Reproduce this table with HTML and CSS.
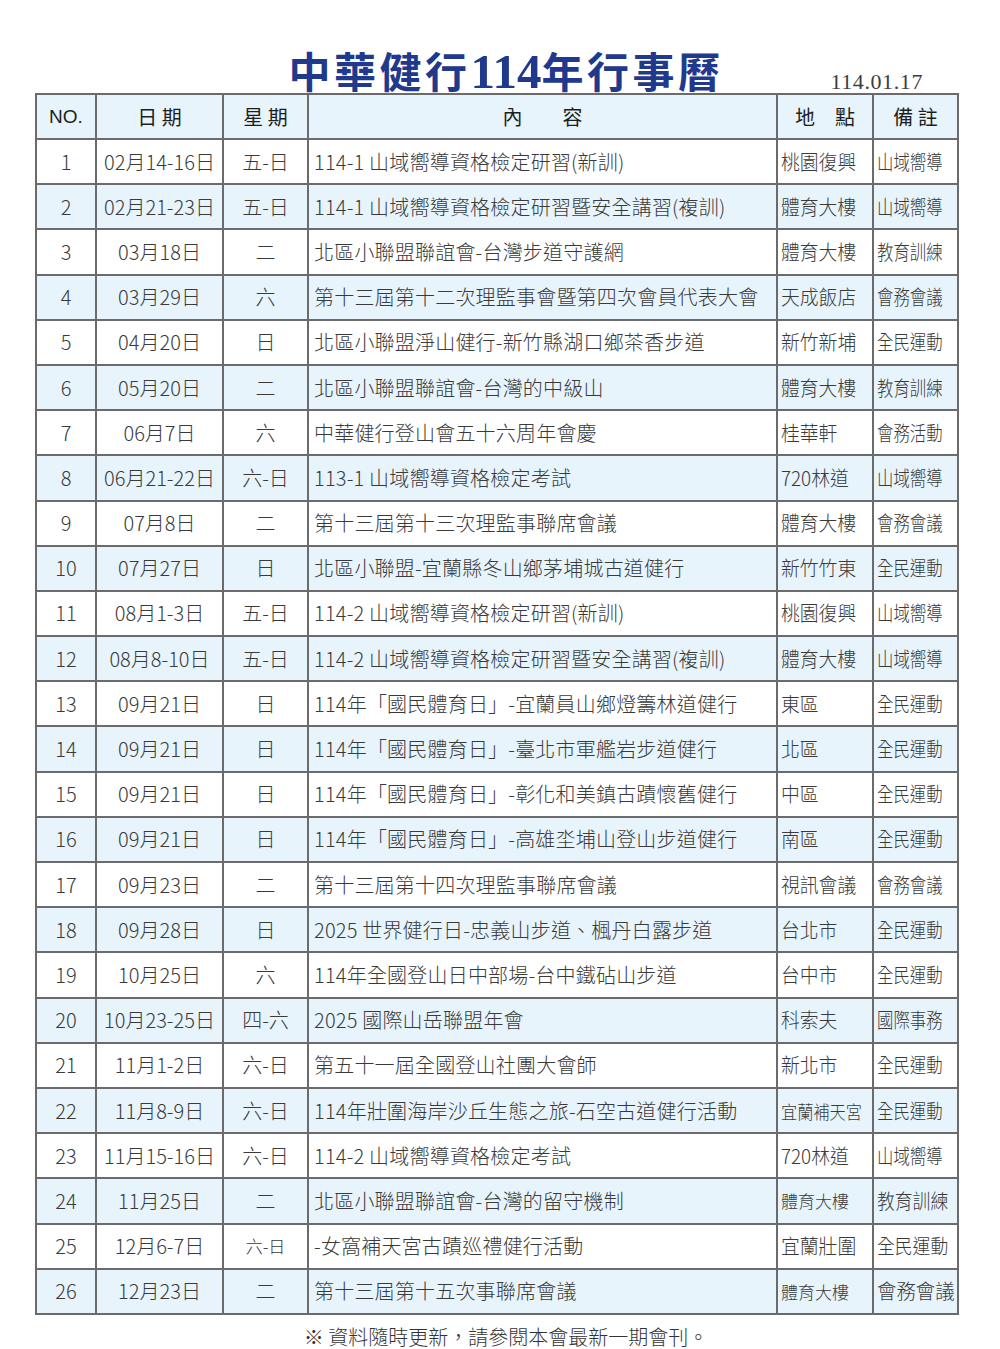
FILE: index.html
```html
<!DOCTYPE html>
<html lang="zh-Hant">
<head>
<meta charset="utf-8">
<title>中華健行114年行事曆</title>
<link rel="stylesheet" href="styles.css">
</head>
<body>
<div class="page">
  <header class="head">
    <div></div>
    <h1 class="title">中華健行<span class="num">114</span>年行事曆</h1>
    <div class="date">114.01.17</div>
  </header>
  <table class="cal">
    <colgroup>
      <col class="c-no"><col class="c-date"><col class="c-wk"><col class="c-ct"><col class="c-loc"><col class="c-rm">
    </colgroup>
    <thead>
      <tr><th class="no">NO.</th><th>日&nbsp;期</th><th>星&nbsp;期</th><th>內&emsp;&emsp;容</th><th>地&emsp;點</th><th>備&nbsp;註</th></tr>
    </thead>
    <tbody>
      <tr><td>1</td><td>02月14-16日</td><td>五-日</td><td class="ct">114-1 山域嚮導資格檢定研習(新訓)</td><td class="loc"><span class="l">桃園復興</span></td><td class="rm"><span class="r">山域嚮導</span></td></tr>
      <tr><td>2</td><td>02月21-23日</td><td>五-日</td><td class="ct">114-1 山域嚮導資格檢定研習暨安全講習(複訓)</td><td class="loc"><span class="l">體育大樓</span></td><td class="rm"><span class="r">山域嚮導</span></td></tr>
      <tr><td>3</td><td>03月18日</td><td>二</td><td class="ct">北區小聯盟聯誼會-台灣步道守護網</td><td class="loc"><span class="l">體育大樓</span></td><td class="rm"><span class="r">教育訓練</span></td></tr>
      <tr><td>4</td><td>03月29日</td><td>六</td><td class="ct">第十三屆第十二次理監事會暨第四次會員代表大會</td><td class="loc"><span class="l">天成飯店</span></td><td class="rm"><span class="r">會務會議</span></td></tr>
      <tr><td>5</td><td>04月20日</td><td>日</td><td class="ct">北區小聯盟淨山健行-新竹縣湖口鄉茶香步道</td><td class="loc"><span class="l">新竹新埔</span></td><td class="rm"><span class="r">全民運動</span></td></tr>
      <tr><td>6</td><td>05月20日</td><td>二</td><td class="ct">北區小聯盟聯誼會-台灣的中級山</td><td class="loc"><span class="l">體育大樓</span></td><td class="rm"><span class="r">教育訓練</span></td></tr>
      <tr><td>7</td><td>06月7日</td><td>六</td><td class="ct">中華健行登山會五十六周年會慶</td><td class="loc"><span class="l">桂華軒</span></td><td class="rm"><span class="r">會務活動</span></td></tr>
      <tr><td>8</td><td>06月21-22日</td><td>六-日</td><td class="ct">113-1 山域嚮導資格檢定考試</td><td class="loc"><span class="l">720林道</span></td><td class="rm"><span class="r">山域嚮導</span></td></tr>
      <tr><td>9</td><td>07月8日</td><td>二</td><td class="ct">第十三屆第十三次理監事聯席會議</td><td class="loc"><span class="l">體育大樓</span></td><td class="rm"><span class="r">會務會議</span></td></tr>
      <tr><td>10</td><td>07月27日</td><td>日</td><td class="ct">北區小聯盟-宜蘭縣冬山鄉茅埔城古道健行</td><td class="loc"><span class="l">新竹竹東</span></td><td class="rm"><span class="r">全民運動</span></td></tr>
      <tr><td>11</td><td>08月1-3日</td><td>五-日</td><td class="ct">114-2 山域嚮導資格檢定研習(新訓)</td><td class="loc"><span class="l">桃園復興</span></td><td class="rm"><span class="r">山域嚮導</span></td></tr>
      <tr><td>12</td><td>08月8-10日</td><td>五-日</td><td class="ct">114-2 山域嚮導資格檢定研習暨安全講習(複訓)</td><td class="loc"><span class="l">體育大樓</span></td><td class="rm"><span class="r">山域嚮導</span></td></tr>
      <tr><td>13</td><td>09月21日</td><td>日</td><td class="ct">114年「國民體育日」-宜蘭員山鄉燈籌林道健行</td><td class="loc"><span class="l">東區</span></td><td class="rm"><span class="r">全民運動</span></td></tr>
      <tr><td>14</td><td>09月21日</td><td>日</td><td class="ct">114年「國民體育日」-臺北市軍艦岩步道健行</td><td class="loc"><span class="l">北區</span></td><td class="rm"><span class="r">全民運動</span></td></tr>
      <tr><td>15</td><td>09月21日</td><td>日</td><td class="ct">114年「國民體育日」-彰化和美鎮古蹟懷舊健行</td><td class="loc"><span class="l">中區</span></td><td class="rm"><span class="r">全民運動</span></td></tr>
      <tr><td>16</td><td>09月21日</td><td>日</td><td class="ct">114年「國民體育日」-高雄坔埔山登山步道健行</td><td class="loc"><span class="l">南區</span></td><td class="rm"><span class="r">全民運動</span></td></tr>
      <tr><td>17</td><td>09月23日</td><td>二</td><td class="ct">第十三屆第十四次理監事聯席會議</td><td class="loc"><span class="l">視訊會議</span></td><td class="rm"><span class="r">會務會議</span></td></tr>
      <tr><td>18</td><td>09月28日</td><td>日</td><td class="ct">2025 世界健行日-忠義山步道、楓丹白露步道</td><td class="loc"><span class="l">台北市</span></td><td class="rm"><span class="r">全民運動</span></td></tr>
      <tr><td>19</td><td>10月25日</td><td>六</td><td class="ct">114年全國登山日中部場-台中鐵砧山步道</td><td class="loc"><span class="l">台中市</span></td><td class="rm"><span class="r">全民運動</span></td></tr>
      <tr><td>20</td><td>10月23-25日</td><td>四-六</td><td class="ct">2025 國際山岳聯盟年會</td><td class="loc"><span class="l">科索夫</span></td><td class="rm"><span class="r">國際事務</span></td></tr>
      <tr><td>21</td><td>11月1-2日</td><td>六-日</td><td class="ct">第五十一屆全國登山社團大會師</td><td class="loc"><span class="l">新北市</span></td><td class="rm"><span class="r">全民運動</span></td></tr>
      <tr><td>22</td><td>11月8-9日</td><td>六-日</td><td class="ct">114年壯圍海岸沙丘生態之旅-石空古道健行活動</td><td class="loc"><span class="l xs">宜蘭補天宮</span></td><td class="rm"><span class="r">全民運動</span></td></tr>
      <tr><td>23</td><td>11月15-16日</td><td>六-日</td><td class="ct">114-2 山域嚮導資格檢定考試</td><td class="loc"><span class="l">720林道</span></td><td class="rm"><span class="r">山域嚮導</span></td></tr>
      <tr><td>24</td><td>11月25日</td><td>二</td><td class="ct">北區小聯盟聯誼會-台灣的留守機制</td><td class="loc"><span class="l sm">體育大樓</span></td><td class="rm"><span class="r wide">教育訓練</span></td></tr>
      <tr><td>25</td><td>12月6-7日</td><td class="small">六-日</td><td class="ct">-女窩補天宮古蹟巡禮健行活動</td><td class="loc"><span class="l">宜蘭壯圍</span></td><td class="rm"><span class="r wide">全民運動</span></td></tr>
      <tr><td>26</td><td>12月23日</td><td>二</td><td class="ct">第十三屆第十五次事聯席會議</td><td class="loc"><span class="l sm">體育大樓</span></td><td class="rm"><span class="r full">會務會議</span></td></tr>
    </tbody>
  </table>
  <p class="note">※ 資料隨時更新，請參閱本會最新一期會刊。</p>
</div>
</body>
</html>
```

FILE: styles.css
```css
html, body {
  margin: 0;
  padding: 0;
  background: #ffffff;
}

body {
  font-family: "Noto Sans CJK TC", "Noto Sans", sans-serif;
  color: #3a3a3a;
}

.page {
  width: 922px;
  margin: 0 auto 0 35px;
  padding-top: 47px;
}

.head {
  display: grid;
  grid-template-columns: 1fr auto 1fr;
  align-items: end;
  height: 46px;
}

.title {
  margin: 0 0 0 20px;
  font-family: "Noto Sans CJK TC", sans-serif;
  font-weight: 700;
  font-size: 42px;
  line-height: 46px;
  color: #1f3a8c;
  letter-spacing: 3.5px;
  white-space: nowrap;
}

.title .num {
  font-family: "Liberation Serif", serif;
  font-size: 49px;
  letter-spacing: 0;
}

.date {
  justify-self: end;
  margin-right: 34px;
  margin-bottom: 2px;
  font-family: "Liberation Serif", serif;
  font-size: 22px;
  letter-spacing: 0.6px;
  line-height: 22px;
  color: #3d3d3d;
}

.cal {
  width: 922px;
  border-collapse: collapse;
  table-layout: fixed;
}

.c-no { width: 60px; }
.c-date { width: 127px; }
.c-wk { width: 85px; }
.c-ct { width: 469px; }
.c-loc { width: 96px; }
.c-rm { width: 85px; }

.cal th,
.cal td {
  border: 2px solid #6b6b6b;
  padding: 0;
  font-weight: 300;
  font-size: 20px;
  line-height: 24px;
  text-align: center;
  white-space: nowrap;
  overflow: hidden;
}

.cal thead tr {
  height: 45px;
  background: #e7f4fc;
}

.cal th {
  font-weight: 400;
  color: #1e1e1e;
  font-size: 20px;
}

.cal th.no {
  font-family: "Liberation Sans", sans-serif;
  font-size: 19px;
}

.cal tbody tr {
  height: 45.2px;
}

.cal tbody tr:nth-child(even) {
  background: #e7f4fc;
}

.cal td.ct {
  text-align: left;
  padding-left: 5px;
  letter-spacing: 0.2px;
}

.cal td.loc {
  text-align: left;
  padding-left: 3px;
}

.cal td.rm {
  text-align: left;
  padding-left: 3px;
}

.cal td.small {
  font-size: 17px;
}

.l,
.r {
  display: inline-block;
  transform-origin: left center;
}

.l { transform: scaleX(0.94); }
.l.sm { font-size: 17px; transform: scaleX(1); }
.l.xs { font-size: 18px; transform: scaleX(0.9); }

.r { transform: scaleX(0.82); }
.r.wide { transform: scaleX(0.89); }
.r.full { transform: scaleX(0.97); }

.note {
  margin: 10px 0 0 0;
  text-align: center;
  padding-left: 20px;
  font-size: 20px;
  line-height: 24px;
  font-weight: 300;
  color: #333;
}
```
